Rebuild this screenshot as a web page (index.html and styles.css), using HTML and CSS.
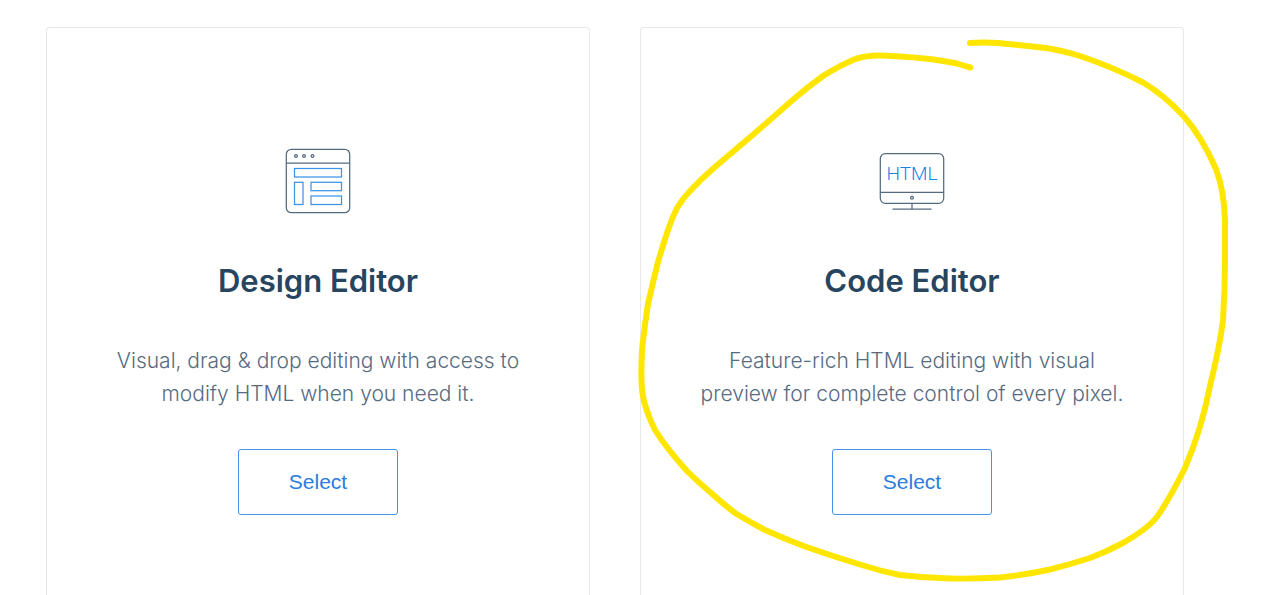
FILE: index.html
```html
<!DOCTYPE html>
<html lang="en">
<head>
<meta charset="utf-8">
<meta name="viewport" content="width=device-width, initial-scale=1">
<title>Choose an editor</title>
<link rel="stylesheet" href="styles.css">
</head>
<body>
<main class="editors">
  <section class="card">
    <svg class="card-icon" viewBox="0 0 66 66" fill="none" aria-hidden="true">
      <g stroke="#546a7f" stroke-width="1.25">
        <rect x="1.3" y="1.3" width="63.4" height="63.4" rx="5"/>
        <path d="M1.3 15H64.7"/>
        <circle cx="11" cy="8" r="1.4"/><circle cx="19" cy="8" r="1.4"/><circle cx="27.5" cy="8" r="1.4"/>
      </g>
      <g stroke="#3c94e8" stroke-width="1.25">
        <rect x="9.5" y="20.5" width="47" height="8.5"/>
        <rect x="9.5" y="34.3" width="8.5" height="22.2"/>
        <rect x="26" y="34.3" width="30.5" height="8.4"/>
        <rect x="26" y="48" width="30.5" height="8.5"/>
      </g>
    </svg>
    <h2 class="card-title">Design Editor</h2>
    <p class="card-text">Visual, drag &amp; drop editing with access to modify HTML when you need it.</p>
    <button class="select-button" type="button">Select</button>
  </section>
  <section class="card">
    <svg class="card-icon" viewBox="0 0 66 66" fill="none" aria-hidden="true">
      <g stroke="#546a7f" stroke-width="1.25">
        <rect x="1.3" y="5.7" width="63.4" height="49.6" rx="5"/>
        <path d="M1.3 44.3H64.7M33 55.3V61M13.5 61H52.5"/>
        <circle cx="33" cy="49.8" r="1.4"/>
      </g>
      <text class="icon-label" x="33" y="32" text-anchor="middle">HTML</text>
    </svg>
    <h2 class="card-title">Code Editor</h2>
    <p class="card-text">Feature-rich HTML editing with visual preview for complete control of every pixel.</p>
    <button class="select-button" type="button">Select</button>
    <svg class="marker" viewBox="630 30 610 560" fill="none" aria-hidden="true">
      <path d="M970.5 67.5Q965 66 957 63.5Q944 61 930 59Q915 57.500 900 56.500L892 56Q866 54 853 60Q839 66 823 76Q809 86 795 98L755 133Q735 150 715 167Q702 178 690 191Q683 198 677 208Q672 218 668 230Q663 245 658 262Q653 282 648 304Q645 323 642.500 345Q641 363 641.500 380Q641.500 392 645 405Q649 418 655 430Q662 441 670 451Q678 461 687 471Q698 482 710 492Q722 503 735 513Q750 522 765 530Q785 539 805 546.500Q832 556 860 564.500Q880 571 900 575Q925 578 950 578.500Q975 579 1000 577.500Q1025 575 1050 569.500Q1070 564.500 1090 558Q1106 552 1121 544Q1150 528 1159 514Q1171 496 1185 468Q1202 428 1210 386Q1220 345 1223 320Q1225 290 1225 260L1225 220Q1224 190 1216 169Q1202 137 1184 116.500Q1163 94 1143 82.500Q1113 67 1080 56Q1058 49 1037 47Q1018 45 998 43Q984 42 970 43"/>
    </svg>
  </section>
</main>
</body>
</html>
```
FILE: styles.css
```css
* {
  box-sizing: border-box;
}

body {
  margin: 0;
  background: #fff;
  font-family: Inter, "Liberation Sans", sans-serif;
}

.editors {
  display: grid;
  grid-template-columns: 1fr 1fr;
  gap: 50px;
  min-height: 100vh;
  padding: 27px 103px 0 46px;
  overflow: hidden;
}

.card {
  position: relative;
  display: flex;
  flex-direction: column;
  align-items: center;
  padding: 120px 56px 72px;
  border: 1px solid #e6e8ec;
  border-bottom: 0;
  border-radius: 4px 4px 0 0;
  text-align: center;
}

.card-icon {
  width: 66px;
  height: 66px;
}

.icon-label {
  fill: #1484e8;
  font-family: Roboto, sans-serif;
  font-size: 19px;
  font-weight: 300;
}

.card-title {
  margin: 47px 0 0;
  color: #27455f;
  font-size: 31px;
  font-weight: 600;
  line-height: 40px;
}

.card-text {
  margin: 43px 0 0;
  color: #566b80;
  font-size: 21px;
  font-weight: 300;
  line-height: 33px;
}

.select-button {
  width: 160px;
  height: 66px;
  margin-top: 39px;
  border: 1px solid #4496e8;
  border-radius: 3px;
  background: #fff;
  color: #2b7de0;
  font-family: "Liberation Sans", Arial, sans-serif;
  font-size: 21px;
}

.marker {
  position: absolute;
  top: 2px;
  left: -11px;
  width: 610px;
  height: 560px;
  stroke: #ffe600;
  stroke-width: 6;
  stroke-linecap: round;
  stroke-linejoin: round;
  pointer-events: none;
}
```
